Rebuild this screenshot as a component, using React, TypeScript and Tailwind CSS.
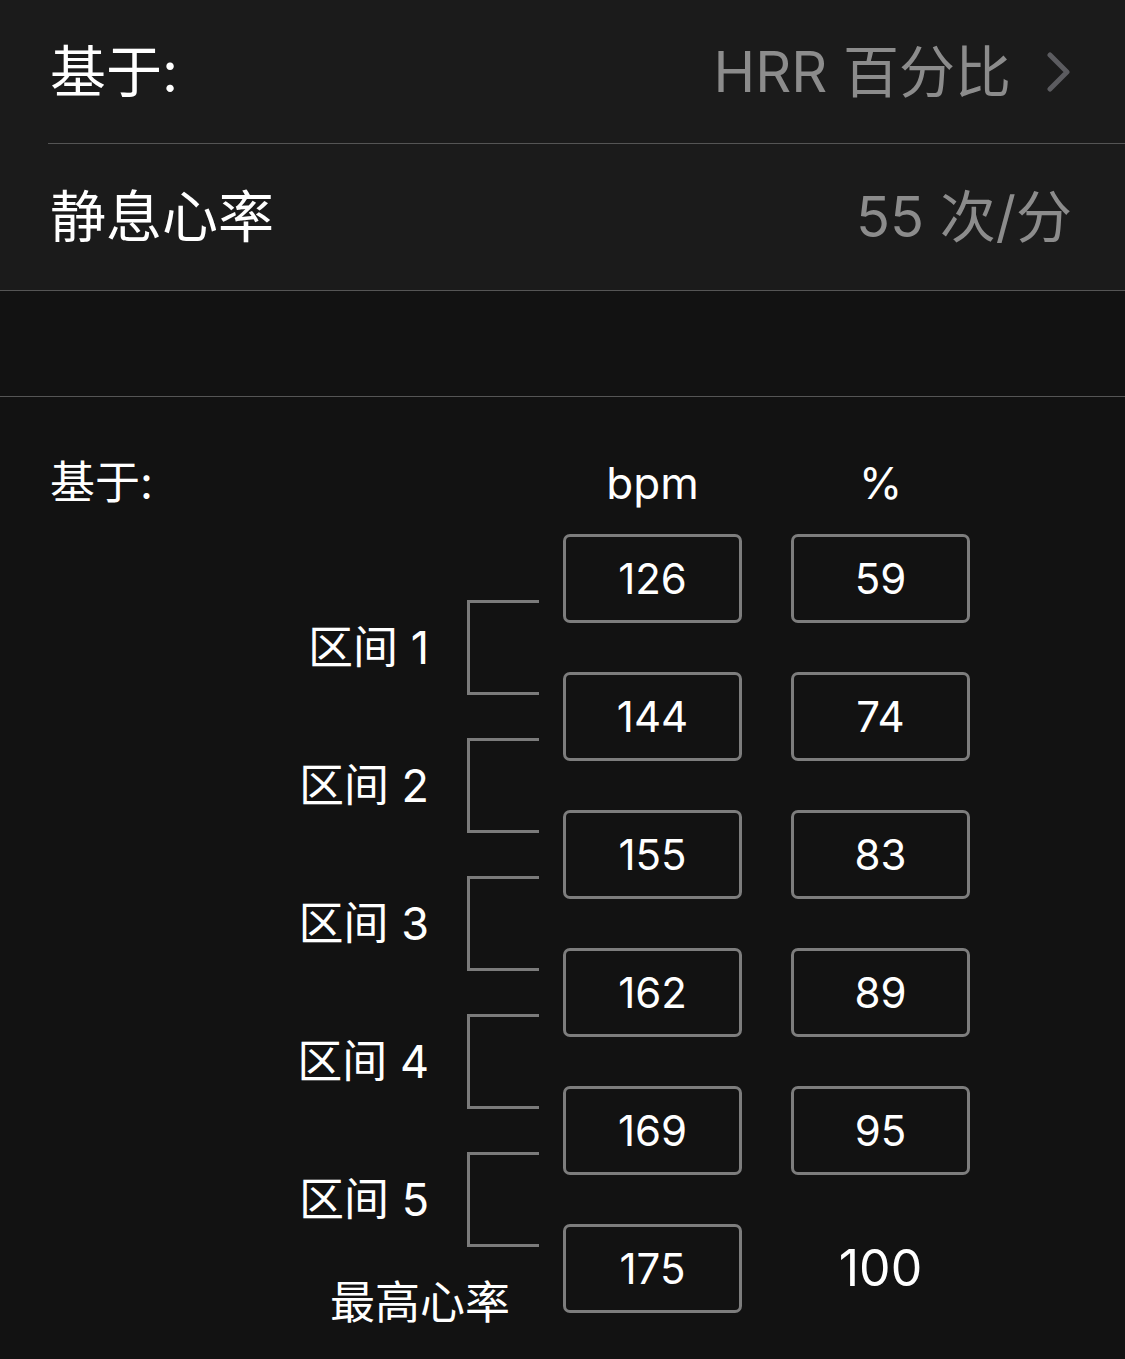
import React from "react";

const zones = ["区间 1", "区间 2", "区间 3", "区间 4", "区间 5"];
const bpm = [126, 144, 155, 162, 169];
const pct = [59, 74, 83, 89, 95];

function Chevron() {
  return (
    <svg width="24" height="40" viewBox="0 0 24 40" fill="none">
      <polyline
        points="3,3 20,20 3,37"
        stroke="#5c5c60"
        strokeWidth="5"
        strokeLinecap="round"
        strokeLinejoin="round"
      />
    </svg>
  );
}

function Box({ v }: { v: number }) {
  return (
    <div className="w-[179px] h-[89px] border-[3px] border-[#7d7d7d] rounded-[7px] flex items-center justify-center text-[42px] text-white">
      {v}
    </div>
  );
}

export default function App() {
  return (
    <div className="min-h-[1359px] bg-[#121212] font-['Inter','Noto_Sans_CJK_SC',sans-serif] text-white overflow-hidden">
      {/* Top settings list */}
      <div className="bg-[#1b1b1b]">
        <div className="h-[143px] flex items-center justify-between pl-[50px] pr-[54px] text-[56px]">
          <span>基于:</span>
          <div className="flex items-center gap-[36px] text-[#8c8c8c]">
            <span>HRR 百分比</span>
            <Chevron />
          </div>
        </div>
        <div className="ml-[48px] h-px bg-[#555555]" />
        <div className="h-[146px] flex items-center justify-between pl-[50px] pr-[53px] text-[56px]">
          <span>静息心率</span>
          <span className="text-[#8c8c8c]">55 次/分</span>
        </div>
      </div>
      <div className="h-px bg-[#555555]" />
      <div className="h-[105px]" />
      <div className="h-px bg-[#555555]" />

      {/* Zones */}
      <div className="pt-[62px] flex text-[44px] leading-[48px]">
        <div className="w-[563px] pl-[50px] text-[45px]">基于:</div>
        <div className="w-[179px] text-center">bpm</div>
        <div className="ml-[49px] w-[179px] text-center">%</div>
      </div>

      <div className="mt-[27px] flex">
        <div className="w-[539px] pt-[66px] flex flex-col gap-[43px] text-[45px] leading-[48px]">
          {zones.map((z) => (
            <div key={z} className="h-[95px] flex items-center justify-end">
              <span className="mr-[38px]">{z}</span>
              <div className="w-[72px] h-full border-[3px] border-r-0 border-[#7b7b7b]" />
            </div>
          ))}
          <div className="-mt-[11px] pl-[330px]">最高心率</div>
        </div>
        <div className="ml-[24px] flex flex-col gap-[49px]">
          {bpm.map((b, i) => (
            <div key={b} className="flex gap-[49px]">
              <Box v={b} />
              <Box v={pct[i]} />
            </div>
          ))}
          <div className="flex gap-[49px]">
            <Box v={175} />
            <div className="w-[179px] h-[89px] flex items-center justify-center text-[50px]">100</div>
          </div>
        </div>
      </div>
    </div>
  );
}
